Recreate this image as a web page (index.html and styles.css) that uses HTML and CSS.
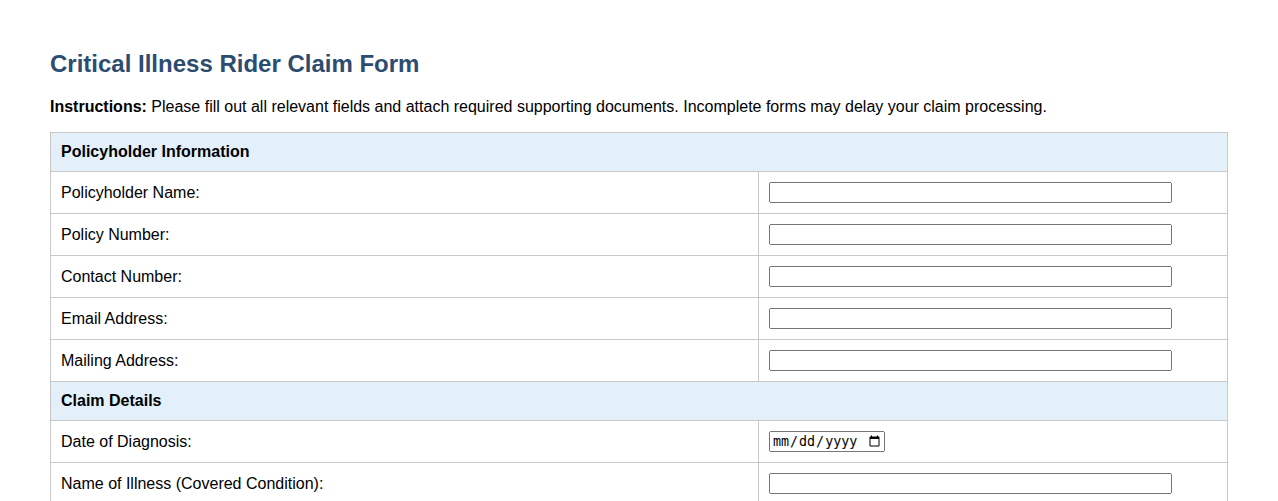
FILE: index.html
```html
<!DOCTYPE html>
<html>
<head>
<meta charset="utf-8">
<link rel="stylesheet" href="styles.css">
</head>
<body>
<div class="page">
  <h1 class="title">Critical Illness Rider Claim Form</h1>
  <p class="instructions"><strong>Instructions:</strong> Please fill out all relevant fields and attach required supporting documents. Incomplete forms may delay your claim processing.</p>
  <table class="form-table">
    <tr class="section"><th colspan="2">Policyholder Information</th></tr>
    <tr><td class="label">Policyholder Name:</td><td class="field"><input type="text"></td></tr>
    <tr><td class="label">Policy Number:</td><td class="field"><input type="text"></td></tr>
    <tr><td class="label">Contact Number:</td><td class="field"><input type="text"></td></tr>
    <tr><td class="label">Email Address:</td><td class="field"><input type="text"></td></tr>
    <tr><td class="label">Mailing Address:</td><td class="field"><input type="text"></td></tr>
    <tr class="section"><th colspan="2">Claim Details</th></tr>
    <tr><td class="label">Date of Diagnosis:</td><td class="field"><input type="date" class="date"></td></tr>
    <tr><td class="label">Name of Illness (Covered Condition):</td><td class="field"><input type="text"></td></tr>
  </table>
</div>
</body>
</html>
```
FILE: styles.css
```css
body {
  margin: 0;
  font-family: "Liberation Sans", Arial, sans-serif;
  background: #fff;
  color: #000;
}
.page {
  padding: 40px 50px 0;
}
.title {
  font-size: 24px;
  color: #2c4c70;
  margin: 10px 0 20px;
}
.instructions {
  font-size: 16px;
  margin: 0 0 16px;
}
.form-table {
  width: 100%;
  border-collapse: collapse;
  font-size: 16px;
}
.form-table th,
.form-table td {
  border: 1px solid #c8c8c8;
  padding: 10px;
  text-align: left;
}
.section th {
  background: #e3f0fa;
  font-weight: bold;
}
.label {
  width: 60.15%;
}
.field input {
  width: 90%;
  box-sizing: border-box;
}
.field input.date {
  width: 116px;
}
```
